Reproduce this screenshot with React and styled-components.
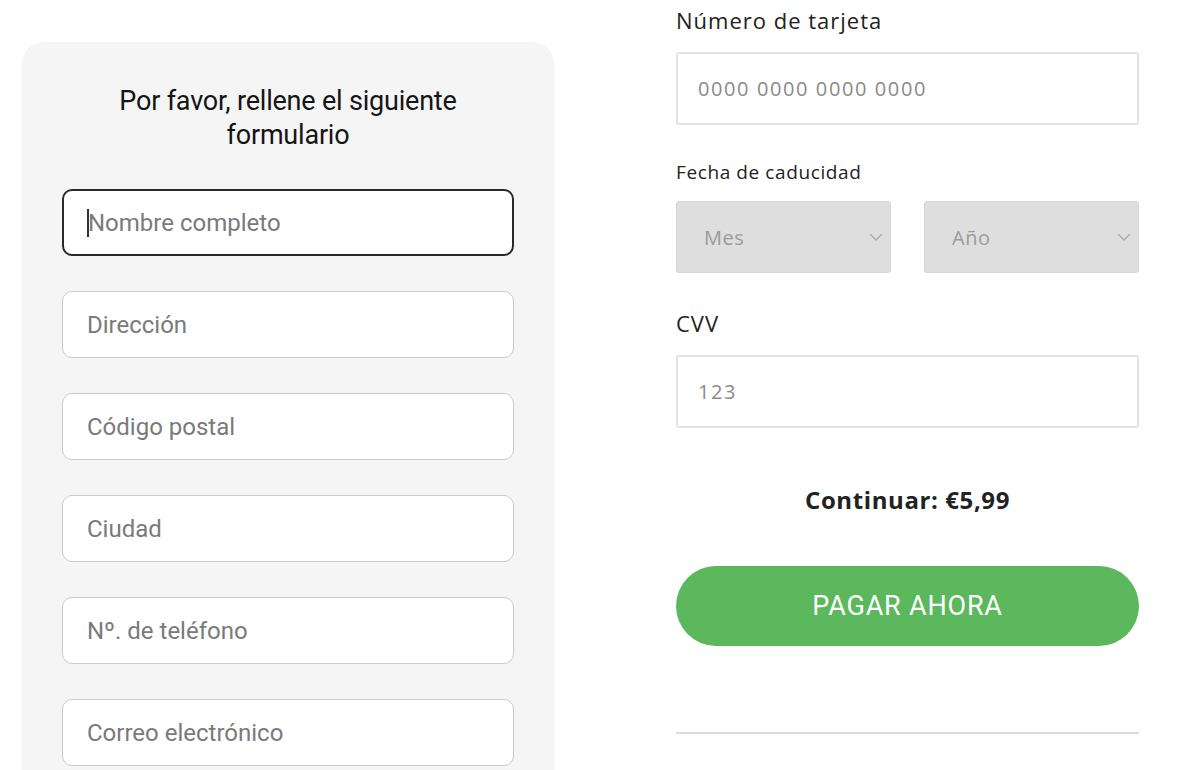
import React from 'react';
import styled, {createGlobalStyle} from 'styled-components';

const GlobalStyle = createGlobalStyle`
    html, body {
        margin: 0;
        padding: 0;
        background: #fff;
        overflow: hidden;
    }
    * {
        box-sizing: border-box;
    }
`

const Page = styled.div`
    width: 1200px;
    height: 770px;
    display: flex;
    align-items: flex-start;
    gap: 122px;
    padding-left: 22px;
    overflow: hidden;
`

const FormCard = styled.div`
    width: 532px;
    margin-top: 42px;
    min-height: 800px;
    padding: 42px 40px;
    background-color: #f5f5f5;
    border-radius: 22px 22px 0 0;
    display: flex;
    flex-direction: column;
    gap: 35px;
    font-family: Roboto, "Liberation Sans", sans-serif;
`

const FormTitle = styled.h2`
    margin: 0 auto 2px;
    max-width: 400px;
    text-align: center;
    font-size: 27px;
    line-height: 34px;
    font-weight: 400;
    color: #151515;
    letter-spacing: -0.2px;
`

const FieldWrap = styled.div`
    position: relative;
`

const TextField = styled.input`
    width: 100%;
    height: 67px;
    padding: 0 24px;
    border-radius: 10px;
    border: ${props => props.active ? '2px solid #2a2a2a' : '1.5px solid #cbcbcb'};
    background-color: #fff;
    font-family: Roboto, "Liberation Sans", sans-serif;
    font-size: 24px;
    color: #222;
    outline: none;

    &::placeholder {
        color: #7a7a7a;
    }
`

const Caret = styled.span`
    position: absolute;
    left: 25px;
    top: 20px;
    width: 2px;
    height: 28px;
    background-color: #333;
`

const PayColumn = styled.div`
    width: 463px;
    padding-top: 7px;
    display: flex;
    flex-direction: column;
    font-family: "Open Sans", "Noto Sans", sans-serif;
`

const Label = styled.div`
    font-size: ${props => props.small ? '19px' : '22px'};
    line-height: ${props => props.small ? '22px' : '26px'};
    letter-spacing: ${props => props.small ? '0.6px' : '1px'};
    color: #222;
    margin-top: ${props => props.mt || 0}px;
`

const BoxInput = styled.input`
    width: 100%;
    height: 73px;
    margin-top: 19px;
    padding: 0 20px;
    border: 2px solid #e2e2e2;
    border-radius: 3px;
    background: #fff;
    font-family: "Open Sans", "Noto Sans", sans-serif;
    font-size: 20px;
    letter-spacing: 1.6px;
    color: #222;
    outline: none;

    &::placeholder {
        color: #8a8a8a;
    }
`

const SelectRow = styled.div`
    display: grid;
    grid-template-columns: 1fr 1fr;
    gap: 33px;
    margin-top: 18px;
`

const SelectBox = styled.div`
    height: 72px;
    display: flex;
    align-items: center;
    justify-content: space-between;
    padding: 0 7px 0 27px;
    background-color: #dedede;
    border: 1px solid #d6d6d6;
    border-radius: 3px;
    font-size: 20px;
    letter-spacing: 0.5px;
    color: #9b9b9b;
`

const Total = styled.div`
    margin-top: 58px;
    text-align: center;
    font-size: 24px;
    line-height: 28px;
    font-weight: 700;
    letter-spacing: 0.6px;
    color: #222;
`

const PayButton = styled.button`
    margin-top: 52px;
    height: 80px;
    width: 100%;
    border: 0;
    border-radius: 40px;
    background-color: #5cb85c;
    color: #fff;
    font-family: Roboto, "Liberation Sans", sans-serif;
    font-size: 27px;
    letter-spacing: 0.8px;
    cursor: pointer;
`

const Divider = styled.hr`
    margin: 86px 0 0;
    border: 0;
    border-top: 2px solid #dcdcdc;
`

const Chevron = () => (
    <svg width="14" height="10" viewBox="0 0 14 10" fill="none">
        <path d="M1 2l6 6 6-6" stroke="#aaa" strokeWidth="1.3"/>
    </svg>
)

const fields = ['Dirección', 'Código postal', 'Ciudad', 'Nº. de teléfono', 'Correo electrónico'];

const App = () => {
    return (
        <>
            <GlobalStyle/>
            <Page>
                <FormCard>
                    <FormTitle>Por favor, rellene el siguiente formulario</FormTitle>
                    <FieldWrap>
                        <TextField active placeholder="Nombre completo"/>
                        <Caret/>
                    </FieldWrap>
                    {fields.map(f => (
                        <FieldWrap key={f}>
                            <TextField placeholder={f}/>
                        </FieldWrap>
                    ))}
                </FormCard>
                <PayColumn>
                    <Label>Número de tarjeta</Label>
                    <BoxInput placeholder="0000 0000 0000 0000"/>
                    <Label small mt={36}>Fecha de caducidad</Label>
                    <SelectRow>
                        <SelectBox>Mes<Chevron/></SelectBox>
                        <SelectBox>Año<Chevron/></SelectBox>
                    </SelectRow>
                    <Label mt={37}>CVV</Label>
                    <BoxInput placeholder="123"/>
                    <Total>Continuar: €5,99</Total>
                    <PayButton>PAGAR AHORA</PayButton>
                    <Divider/>
                </PayColumn>
            </Page>
        </>
    )
}

export default App;
